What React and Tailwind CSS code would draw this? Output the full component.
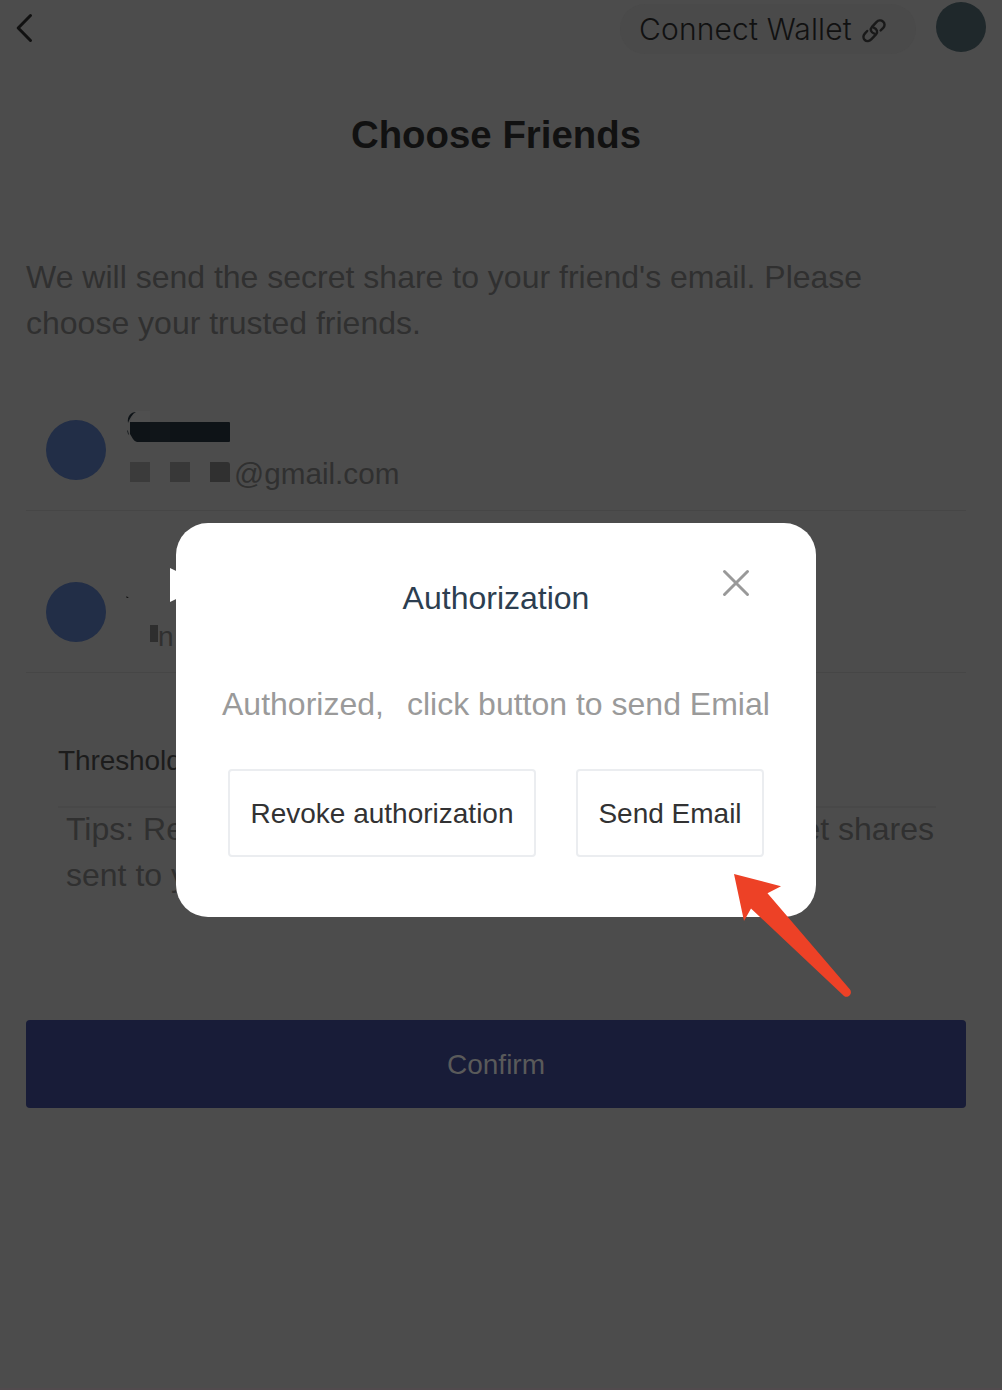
const SANS = "font-['Liberation_Sans',Arial,sans-serif]";

function Header() {
  return (
    <header className="flex h-[70px] items-start">
      <svg className="ml-4 mt-3 h-8 w-5 shrink-0" viewBox="0 0 20 32" fill="none" stroke="#111" strokeWidth="3" strokeLinecap="round" strokeLinejoin="round">
        <path d="M14.5 3.5 2.2 16l12.3 12.5" />
      </svg>
      <button className="ml-auto mt-1 flex h-[50px] w-[296px] items-center whitespace-nowrap rounded-full bg-[#4a4a4a] pl-[19px] text-left font-['Inter','Noto_Sans_CJK_SC',sans-serif] text-[30px] font-light tracking-[0.15px] text-[#111]">
        <span className="w-[214px]">Connect Wallet</span>
        <svg className="ml-[9px] mt-1 h-6 w-6" viewBox="0 0 24 24" fill="none" stroke="#191919" strokeWidth="2.4" strokeLinecap="round" strokeLinejoin="round">
          <path d="M12.300 14.600C9 13.500 7.700 10.500 10 7.900L14.400 3.100C16.300 1.100 19.200.900 21.100 2.600 23 4.400 23 7 21.200 8.900L18.600 11.500" />
          <path d="M11.700 8.700C15 9.900 16.200 12.900 14 15.400L9.500 20.100C7.500 22.200 4.700 22.700 2.800 21 .9 19.300 1 16.500 2.800 14.600L5.200 12" />
        </svg>
      </button>
      <span className="ml-5 mr-4 mt-0.5 size-[50px] rounded-full bg-[#1f282b]" />
    </header>
  );
}

function Friends() {
  return (
    <ul className="ml-[26px] mr-9 mt-[45px]">
      <li className="flex h-[120px] border-b border-[#464646] pl-5 pt-[29px]">
        <span className="size-[60px] rounded-full bg-[#222e47]" />
        <div className="-mt-[11px] ml-5">
          <svg className="block h-9 w-[106px]" viewBox="0 0 106 36">
            <path d="M9 2h15v11H4z" fill="#4f4f4f" />
            <path d="M2 14C1 7 5 3 10 3 6 5 4 9 2 14M1 21l1 1 1 4-1-1z" fill="#0e1317" />
            <path d="M4 13h99q1 0 1 1v18q0 1-1 1H11q-2 0-4-3l-3-5z" fill="#0e1317" />
            <path d="M24 13h20v20H24z" fill="#101519" />
          </svg>
          <div className="mt-px flex h-[56px] items-start pl-1 text-[29.7px] leading-[34px] text-[#303030]">
            <span className="mr-5 mt-4 size-5 bg-[#3b3b3b]" />
            <span className="mr-5 mt-4 size-5 bg-[#383838]" />
            <span className="mt-4 size-5 rounded-tr-[3px] bg-[#303030]" />
            <span className="ml-1 mt-[11px]">@gmail.com</span>
          </div>
        </div>
      </li>
      <li className="flex h-[162px] border-b border-[#464646] pl-5 pt-[71px]">
        <span className="size-[60px] rounded-full bg-[#222e47]" />
        <div className="ml-5 mt-3.5">
          <svg className="block h-4 w-2" viewBox="0 0 8 16"><path d="M.500 0 2.800 2H.500z" fill="#111" /></svg>
          <div className="flex items-start pl-6 text-[28px] leading-8 text-[#303030]">
            <span className="mt-[13px] h-[17px] w-2 bg-[#2e2e2e]" />
            <span className="mt-[9px] w-4 overflow-hidden">n</span>
          </div>
        </div>
      </li>
    </ul>
  );
}

function Threshold() {
  return (
    <section className="ml-[58px] mr-[66px]">
      <div className="flex h-[135px] items-end border-b-2 border-[#484848] pb-[29px] text-[28px] leading-8 tracking-[-0.1px] text-[#1c1c1c]">Threshold</div>
      <div className="-mt-0.5 ml-2 text-[32px] leading-[46px] text-[#303030]">
        <p className="mr-0.5 flex justify-between whitespace-nowrap"><span>Tips: Re</span><span>et shares</span></p>
        <p>sent to y</p>
      </div>
    </section>
  );
}

function Modal() {
  return (
    <div role="dialog" aria-label="Authorization" className="absolute left-[176px] top-[523px] h-[394px] w-[640px] rounded-[32px] bg-white text-center">
      <h2 className="pt-[56px] text-[32px] leading-[38px] text-[#2c3e50]">Authorization</h2>
      <button aria-label="Close" className="absolute right-[66px] top-[46px] size-7">
        <svg viewBox="0 0 28 28" fill="none" stroke="#999" strokeWidth="3" strokeLinecap="round"><path d="m2.500 2.500 23 23m0-23-23 23" /></svg>
      </button>
      <p className="mt-[68px] flex whitespace-nowrap pl-[46px] text-[32px] leading-[38px] text-[#9a9a9a]">
        <span className="w-[185px] text-left">Authorized,</span><span>click button to send Emial</span>
      </p>
      <div className="ml-[52px] mt-[46px] flex gap-10 text-[28px] text-[#323233]">
        <button className="h-[88px] w-[308px] whitespace-nowrap rounded border-2 border-[#ebedf0] pt-0.5">Revoke authorization</button>
        <button className="h-[88px] w-[188px] whitespace-nowrap rounded border-2 border-[#ebedf0] pt-0.5">Send Email</button>
      </div>
    </div>
  );
}

export default function App() {
  return (
    <main className={`relative h-[1390px] w-[1002px] overflow-hidden border-b-2 border-[#514a4d] bg-[#4c4c4c] ${SANS}`}>
      <Header />
      <h1 className="mt-[41px] pr-2.5 text-center text-[38.4px] font-bold leading-[48px] text-[#111]">Choose Friends</h1>
      <p className="ml-[26px] mt-[95px] w-[900px] text-[32px] leading-[46px] text-[#303030]">
        We will send the secret share to your friend's email. Please<br />choose your trusted friends.
      </p>
      <Friends />
      <Threshold />
      <button className="ml-[26px] mt-[122px] h-[88px] w-[940px] rounded bg-[#181c38] pt-0.5 text-[28px] text-[#5a5a5a]">Confirm</button>
      <svg className="absolute left-[169px] top-[567px] h-9 w-10" viewBox="0 0 40 36"><path d="M1 1 36 18 1 35z" fill="#fff" /></svg>
      <Modal />
      <svg className="absolute left-[732px] top-[872px] h-[128px] w-[122px]" viewBox="0 0 122 128">
        <path d="M2 2 49 14.300 35.500 21.300 118 117.500C121 121.500 116 127 112 124L19 36.500 12 49z" fill="#ed4126" />
      </svg>
    </main>
  );
}
